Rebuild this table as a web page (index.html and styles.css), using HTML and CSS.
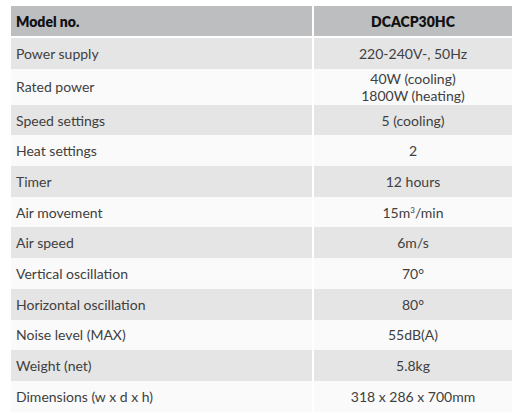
FILE: index.html
```html
<!DOCTYPE html>
<html>
<head>
<meta charset="utf-8">
<link rel="stylesheet" href="styles.css">
</head>
<body>
<table class="spec">
  <thead>
    <tr class="head"><th class="label">Model no.</th><th class="val">DCACP30HC</th></tr>
  </thead>
  <tbody>
    <tr class="grey"><td class="label">Power supply</td><td class="val">220-240V-, 50Hz</td></tr>
    <tr class="white tall"><td class="label">Rated power</td><td class="val">40W (cooling)<br>1800W (heating)</td></tr>
    <tr class="grey"><td class="label">Speed settings</td><td class="val">5 (cooling)</td></tr>
    <tr class="white"><td class="label">Heat settings</td><td class="val">2</td></tr>
    <tr class="grey"><td class="label">Timer</td><td class="val">12 hours</td></tr>
    <tr class="white"><td class="label">Air movement</td><td class="val">15m<sup>3</sup>/min</td></tr>
    <tr class="grey"><td class="label">Air speed</td><td class="val">6m/s</td></tr>
    <tr class="white"><td class="label">Vertical oscillation</td><td class="val">70°</td></tr>
    <tr class="grey"><td class="label">Horizontal oscillation</td><td class="val">80°</td></tr>
    <tr class="white"><td class="label">Noise level (MAX)</td><td class="val">55dB(A)</td></tr>
    <tr class="grey"><td class="label">Weight (net)</td><td class="val">5.8kg</td></tr>
    <tr class="white"><td class="label">Dimensions (w x d x h)</td><td class="val">318 x 286 x 700mm</td></tr>
  </tbody>
</table>
</body>
</html>
```
FILE: styles.css
```css
html, body {
  margin: 0;
  padding: 0;
  background: #ffffff;
}
body {
  padding: 6px 8px 0 11px;
  font-family: Lato, "Liberation Sans", sans-serif;
}
.spec {
  width: 501px;
  border-collapse: collapse;
  font-size: 14px;
  color: #404040;
}
.spec th, .spec td {
  padding: 0 5px;
  font-weight: normal;
  line-height: 17px;
  vertical-align: middle;
}
.spec .label {
  width: 291px;
  text-align: left;
}
.spec .val {
  text-align: center;
  border-left: 2px solid #ffffff;
}
.head th {
  background: #bdbebf;
  color: #111111;
  font-weight: 800;
  border-bottom: 2px solid #ffffff;
  height: 30px;
}
.grey td { background: #e5e5e6; }
.white td { background: #fafafa; }
.spec tbody td { height: 30.7px; }
.spec tbody .tall td { height: 36px; }
sup {
  font-size: 8px;
  line-height: 0;
  vertical-align: 5px;
}
```
